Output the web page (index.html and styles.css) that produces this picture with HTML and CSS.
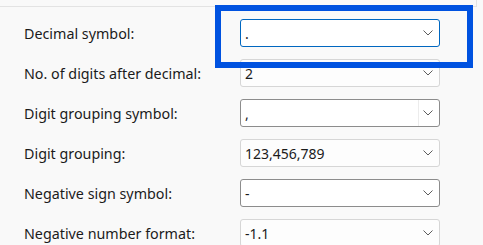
FILE: index.html
```html
<!DOCTYPE html>
<html lang="en">

<head>
  <meta charset="UTF-8">
  <meta name="viewport" content="width=device-width, initial-scale=1.0">
  <title>Number format</title>
  <link rel="stylesheet" href="styles.css">
</head>

<body>
  <div class="card-edge"></div>

  <div class="settings">
    <div class="row">
      <label class="label">Decimal symbol:</label>
      <div class="select focused">
        <span class="value">.</span>
        <svg class="chevron" width="10" height="6" viewBox="0 0 10 6"><polyline points="0.5,0.5 5,5 9.5,0.5" /></svg>
      </div>
    </div>
    <div class="row">
      <label class="label">No. of digits after decimal:</label>
      <div class="select">
        <span class="value">2</span>
        <svg class="chevron" width="10" height="6" viewBox="0 0 10 6"><polyline points="0.5,0.5 5,5 9.5,0.5" /></svg>
      </div>
    </div>
    <div class="row">
      <label class="label">Digit grouping symbol:</label>
      <div class="select hover split">
        <span class="value">,</span>
        <span class="divider"></span>
        <svg class="chevron" width="10" height="6" viewBox="0 0 10 6"><polyline points="0.5,0.5 5,5 9.5,0.5" /></svg>
      </div>
    </div>
    <div class="row">
      <label class="label">Digit grouping:</label>
      <div class="select">
        <span class="value">123,456,789</span>
        <svg class="chevron" width="10" height="6" viewBox="0 0 10 6"><polyline points="0.5,0.5 5,5 9.5,0.5" /></svg>
      </div>
    </div>
    <div class="row">
      <label class="label">Negative sign symbol:</label>
      <div class="select hover">
        <span class="value">-</span>
        <svg class="chevron" width="10" height="6" viewBox="0 0 10 6"><polyline points="0.5,0.5 5,5 9.5,0.5" /></svg>
      </div>
    </div>
    <div class="row">
      <label class="label">Negative number format:</label>
      <div class="select">
        <span class="value">-1.1</span>
        <svg class="chevron" width="10" height="6" viewBox="0 0 10 6"><polyline points="0.5,0.5 5,5 9.5,0.5" /></svg>
      </div>
    </div>
  </div>

  <!-- highlight drawn over the first row -->
  <div class="highlight"></div>
</body>

</html>
```

FILE: styles.css
```css
body {
  margin: 0;
  font-family: "Noto Sans", "Open Sans", sans-serif;
  background-color: #f9f9f9;
  color: #1b1b1b;
  overflow: hidden;
}

.card-edge {
  width: 476px;
  height: 6px;
  border-bottom: 1px solid #e3e3e3;
  border-right: 1px solid #e3e3e3;
}

.settings {
  display: flex;
  flex-direction: column;
  gap: 12px;
  padding: 12px 0 0 24px;
}

.row {
  display: grid;
  grid-template-columns: 216px 200px;
  align-items: center;
  height: 28px;
}

.label {
  font-size: 14.3px;
}

.select {
  box-sizing: border-box;
  height: 28px;
  display: flex;
  align-items: center;
  padding: 0 6px 0 4px;
  border: 1px solid #d6d6d6;
  border-radius: 3px;
  background-color: #fdfdfd;
  font-size: 14px;
}

.select.focused {
  border-color: #0067c0;
  background-color: #fff;
}

.select.hover {
  border-color: #8c8c8c;
  background-color: #fff;
}

.value {
  flex: 1;
}

.divider {
  align-self: stretch;
  width: 1px;
  margin-right: 4px;
  background-color: #ececec;
}

.chevron {
  fill: none;
  stroke: #5c5c5c;
  stroke-width: 1;
}

.highlight {
  position: absolute;
  left: 215px;
  top: 5px;
  width: 246px;
  height: 51px;
  border: 6px solid #0052e0;
}
```
